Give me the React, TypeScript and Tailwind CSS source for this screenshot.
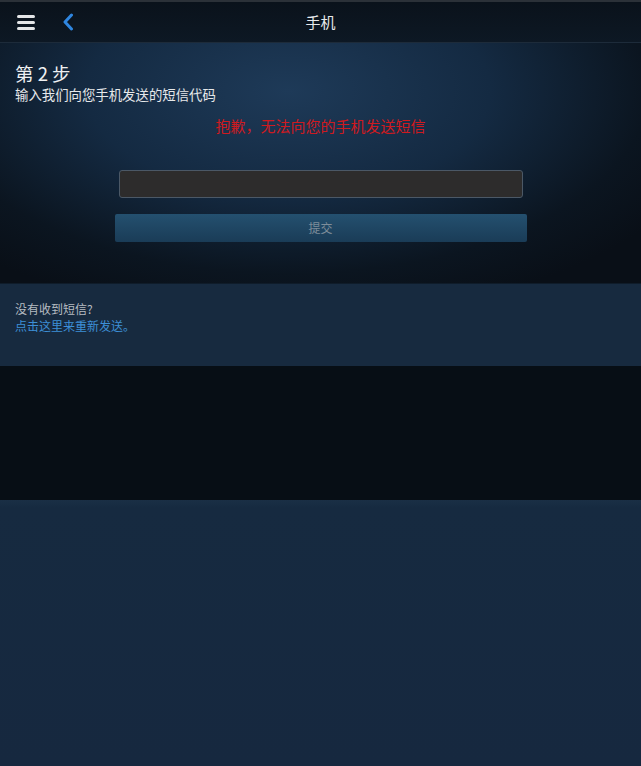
export default function App() {
  return (
    <div
      className="w-[641px] h-[766px] flex flex-col bg-[#16283f] overflow-hidden"
      style={{ fontFamily: '"Noto Sans CJK SC", "Noto Sans", sans-serif' }}
    >
      {/* Header */}
      <div className="h-[43px] flex-none border-t-2 border-t-[#2b3138] border-b border-b-[#1d2b3a] bg-[linear-gradient(to_bottom,#0a121b,#0d1824)] flex items-center relative">
        <div className="pl-[17px] flex flex-col gap-[3px]">
          <div className="w-[18px] h-[3px] bg-[#e4e6e8] rounded-sm" />
          <div className="w-[18px] h-[3px] bg-[#e4e6e8] rounded-sm" />
          <div className="w-[18px] h-[3px] bg-[#e4e6e8] rounded-sm" />
        </div>
        <svg className="ml-[27px]" width="12" height="18" viewBox="0 0 12 18">
          <path d="M9.5 2 L3 9 L9.5 16" fill="none" stroke="#2f86e0" strokeWidth="3" strokeLinecap="round" strokeLinejoin="round" />
        </svg>
        <div className="absolute left-0 right-0 text-center text-[15px] text-[#e8eaec] pointer-events-none">手机</div>
      </div>

      {/* Step area */}
      <div className="h-[240px] flex-none bg-[radial-gradient(ellipse_70%_95%_at_45%_20%,#1e3a58_0%,#142a42_45%,#0b1520_80%,#090f17_100%)] px-[15px] pt-[18px]">
        <div className="text-[18.5px] leading-[24px] text-[#eef0f2]">第 2 步</div>
        <div className="text-[13.4px] leading-[18px] text-[#e6e8ea]">输入我们向您手机发送的短信代码</div>
        <div className="mt-[13px] text-center text-[15px] leading-[20px] text-[#cf1a1f]">抱歉，无法向您的手机发送短信</div>
        <div className="mt-[34px] flex flex-col items-center">
          <div className="w-[404px] h-[28px] rounded-[3px] bg-[#2d2c2c] border border-[#4b5866]" />
          <div className="mt-[16px] w-[412px] h-[28px] rounded-[2px] bg-[linear-gradient(to_bottom,#24506f,#1a3c57)] flex items-center justify-center text-[12px] text-[#7e8d9a]">
            提交
          </div>
        </div>
      </div>

      {/* Resend */}
      <div className="h-[83px] flex-none bg-[#172a3f] border-t border-[#0f1c2a] px-[15px] pt-[16px]">
        <div className="text-[12px] leading-[17px] text-[#b6bcc2]">没有收到短信?</div>
        <div className="text-[12px] leading-[17px] text-[#3d8fd6]">点击这里来重新发送。</div>
      </div>

      {/* Dark band */}
      <div className="h-[134px] flex-none bg-[#070e15]" />

      {/* Bottom */}
      <div className="flex-1 bg-[linear-gradient(to_bottom,#1a2f45_0px,#162a40_8px,#16283f_100%)]" />
    </div>
  )
}
